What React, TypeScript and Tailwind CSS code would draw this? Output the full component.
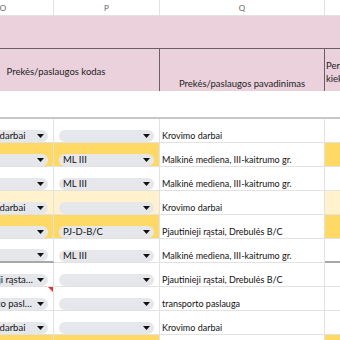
const rows = [
  { o: 'Krovimo darbai', p: '', q: 'Krovimo darbai', fill: 'white' },
  { o: '', p: 'ML III', q: 'Malkinė mediena, III-kaitrumo gr.', fill: 'yellow' },
  { o: '', p: 'ML III', q: 'Malkinė mediena, III-kaitrumo gr.', fill: 'white' },
  { o: 'Krovimo darbai', p: '', q: 'Krovimo darbai', fill: 'light' },
  { o: '', p: 'PJ-D-B/C', q: 'Pjautinieji rąstai, Drebulės B/C', fill: 'yellow' },
  { o: '', p: 'ML III', q: 'Malkinė mediena, III-kaitrumo gr.', fill: 'white', thick: true },
  { o: 'Pjautinieji rąstai, Drebulės B/C', p: '', q: 'Pjautinieji rąstai, Drebulės B/C', fill: 'white' },
  { o: 'transporto paslauga', p: '', q: 'transporto paslauga', fill: 'white', note: true },
  { o: 'Krovimo darbai', p: '', q: 'Krovimo darbai', fill: 'white' },
  { o: '', p: '', q: '', fill: 'yellow' },
]

function fillClass(fill: string) {
  if (fill === 'yellow') return 'bg-[#ffd966]'
  if (fill === 'light') return 'bg-[#fff2cc]'
  return 'bg-white'
}

function Chip({ text }: { text: string }) {
  return (
    <div className="mx-[5px] flex h-[12px] items-center rounded-full bg-[#e6e7ea] pl-[4px] pr-[4px]">
      <span className="min-w-0 flex-1 truncate text-[9.5px] leading-[12px]">{text}</span>
      <svg width="7" height="4" viewBox="0 0 7 4" className="ml-[3px] shrink-0">
        <path d="M0 0h7L3.5 4z" fill="#111" />
      </svg>
    </div>
  )
}

export default function App() {
  return (
    <div className="h-[340px] w-[340px] overflow-hidden bg-white font-['Lato',sans-serif] text-[9.5px] text-[#111]">
      <div className="-ml-[47px] w-[440px]">
        {/* column letters */}
        <div className="grid h-[16px] grid-cols-[101px_106px_165px_68px] border-b border-[#e2e2e2] text-[8px] text-[#666]">
          <div className="flex items-center justify-center border-r border-[#e2e2e2]">O</div>
          <div className="flex items-center justify-center border-r border-[#e2e2e2]">P</div>
          <div className="flex items-center justify-center border-r border-[#e2e2e2]">Q</div>
          <div />
        </div>

        {/* pink header */}
        <div className="h-[33px] border-b border-[#6b5e63] bg-[#ead1dc]" />
        <div className="grid h-[42px] grid-cols-[207px_165px_68px] bg-[#ead1dc] text-[#222]">
          <div className="flex items-center justify-center border-r border-[#6b5e63] pt-[5px]">
            Prekės/paslaugos kodas
          </div>
          <div className="flex items-end justify-center border-r border-[#6b5e63] pb-[1px] leading-[12px]">
            Prekės/paslaugos pavadinimas
          </div>
          <div className="overflow-hidden pl-[1px] pt-[10px] leading-[13px]">
            Perkrauto
            <br />
            kiekis
          </div>
        </div>
        <div className="h-[28px] border-b-2 border-[#c8c8c8]" />

        {/* data rows */}
        {rows.map((r, i) => (
          <div key={i} className="grid h-[24px] grid-cols-[101px_106px_165px_68px] text-[9px]">
            <div
              className={`relative flex flex-col justify-end border-r border-[#e2e2e2] ${fillClass(r.fill)} ${
                r.thick ? 'border-b-2 border-b-[#a8a8a8]' : 'border-b border-b-[#e2e2e2]'
              }`}
            >
              {r.note && (
                <div className="absolute right-0 top-0 h-0 w-0 border-l-[5px] border-t-[5px] border-l-transparent border-t-[#e03030]" />
              )}
              {r.fill !== 'yellow' || r.p ? <Chip text={r.o} /> : null}
            </div>
            <div
              className={`flex flex-col justify-end border-b border-r border-[#e2e2e2] ${fillClass(r.fill)}`}
            >
              {r.q || r.p ? <Chip text={r.p} /> : null}
            </div>
            <div className="flex items-end border-b border-r border-[#e2e2e2] bg-white pl-[2px] leading-[12px]">
              {r.q}
            </div>
            <div
              className={`${fillClass(r.fill)} ${
                r.thick ? 'border-b-2 border-b-[#a8a8a8]' : 'border-b border-b-[#e2e2e2]'
              }`}
            />
          </div>
        ))}
      </div>
    </div>
  )
}
